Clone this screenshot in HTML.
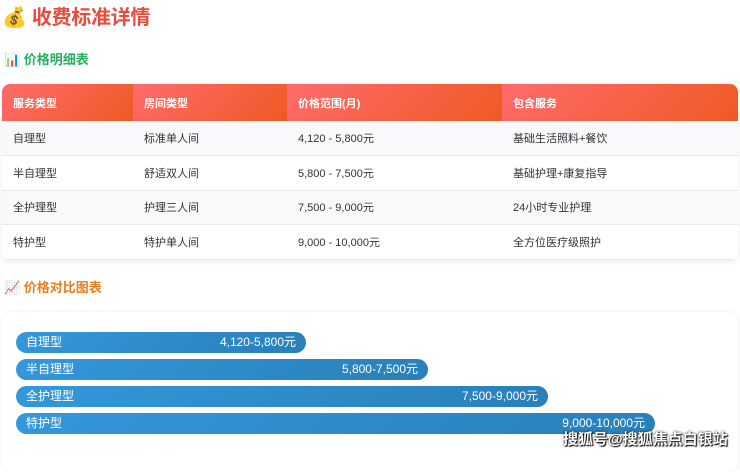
<!DOCTYPE html>
<html><head><meta charset="utf-8"><style>
*{margin:0;padding:0;box-sizing:border-box}
body{width:740px;height:455px;overflow:hidden;background:#fff;font-family:"Liberation Sans","Noto Sans CJK SC",sans-serif;position:relative}
.t{position:absolute;left:2px;top:4px;font-size:20px;font-weight:bold;color:#e74c3c;line-height:28px;letter-spacing:-0.3px}
.s{position:absolute;left:4px;font-size:13px;font-weight:bold;line-height:18px}
table{position:absolute;left:2px;top:84px;width:736px;border-collapse:collapse;border-radius:8px;overflow:hidden;box-shadow:0 2px 6px rgba(0,0,0,.08);font-size:11px;color:#333}
th{height:37px;text-align:left;padding-left:11px;color:#fff;font-weight:bold;background:linear-gradient(135deg,#ff6b6b,#ee5a24)}
td{height:34.5px;padding-left:11px;border-bottom:1px solid #e8e8e8}
tr:nth-child(even) td{background:#f8f9fa}
.card{position:absolute;left:2px;top:312px;width:736px;height:160px;border-radius:10px;background:#fff;box-shadow:0 0 6px rgba(0,0,0,.07)}
.bar{position:absolute;left:16px;height:21px;border-radius:11px;background:linear-gradient(135deg,#3498db,#2980b9);color:#fff;font-size:12px;line-height:21px;padding:0 10px;display:flex;justify-content:space-between}
.wm{position:absolute;left:563px;top:428px;font-size:15px;font-weight:bold;color:#fff;text-shadow:0 0 2px #000,1px 1px 1px #000}
</style></head><body>
<div class="t">💰 收费标准详情</div>
<div class="s" style="top:51px;color:#27ae60">📊 价格明细表</div>
<table>
<tr><th style="width:131px">服务类型</th><th style="width:154px">房间类型</th><th style="width:215px">价格范围(月)</th><th>包含服务</th></tr>
<tr><td>自理型</td><td>标准单人间</td><td>4,120 - 5,800元</td><td>基础生活照料+餐饮</td></tr>
<tr><td>半自理型</td><td>舒适双人间</td><td>5,800 - 7,500元</td><td>基础护理+康复指导</td></tr>
<tr><td>全护理型</td><td>护理三人间</td><td>7,500 - 9,000元</td><td>24小时专业护理</td></tr>
<tr><td>特护型</td><td>特护单人间</td><td>9,000 - 10,000元</td><td>全方位医疗级照护</td></tr>
</table>
<div class="s" style="top:279px;color:#e67e22">📈 价格对比图表</div>
<div class="card"></div>
<div class="bar" style="top:332px;width:290px"><span>自理型</span><span>4,120-5,800元</span></div>
<div class="bar" style="top:359px;width:412px"><span>半自理型</span><span>5,800-7,500元</span></div>
<div class="bar" style="top:386px;width:532px"><span>全护理型</span><span>7,500-9,000元</span></div>
<div class="bar" style="top:413px;width:639px"><span>特护型</span><span>9,000-10,000元</span></div>
<div class="wm">搜狐号@搜狐焦点白银站</div>
</body></html>
